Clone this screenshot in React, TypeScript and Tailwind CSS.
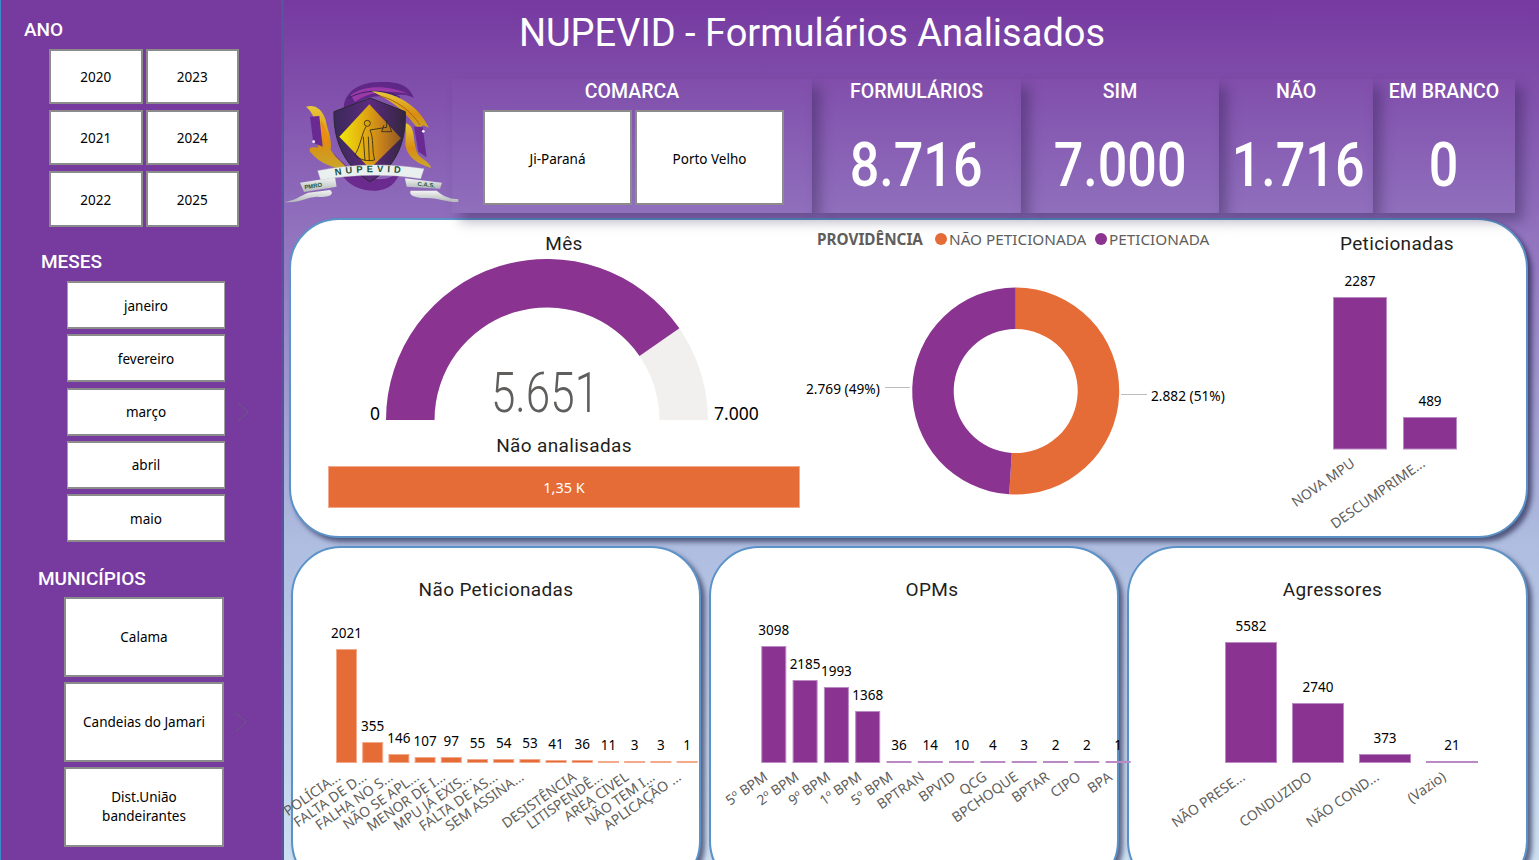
import React from "react";

const din = "font-['Roboto',sans-serif]";
const seg = "font-['Noto_Sans',sans-serif]";
const PURPLE = "#8a3391";
const ORANGE = "#e66c37";

function Btn({ children, className }: { children: React.ReactNode; className?: string }) {
  return (
    <div className={`flex items-center justify-center bg-white text-center text-black text-[13.5px] leading-[19px] border-2 border-[#8b8b8b] ${seg} ${className ?? ""}`}>
      {children}
    </div>
  );
}

function Chevron() {
  return (
    <svg width="12" height="20" viewBox="0 0 12 20" className="shrink-0">
      <path d="M1 1 L11 10 L1 19" fill="none" stroke="#6a5a80" strokeWidth="1" />
    </svg>
  );
}

function SideHead({ children, className }: { children: React.ReactNode; className: string }) {
  return <div className={`h-6 leading-6 text-white text-[19px] font-medium translate-y-px ${din} ${className}`}>{children}</div>;
}

function Sidebar() {
  return (
    <aside className="w-[284px] shrink-0 h-full bg-[#773a9f] border-l border-l-[#3d8ac8] border-r-[3px] border-r-[#56559c] flex flex-col">
      <SideHead className="mt-[17px] ml-[23px]">ANO</SideHead>
      <div className="mt-2 ml-[48px] w-[190px] grid grid-cols-2 gap-x-[3px] gap-y-[6px] grid-rows-[55px_55px_56px]">
        {["2020", "2023", "2021", "2024", "2022", "2025"].map((y) => (
          <Btn key={y} className="pt-[2px]">{y}</Btn>
        ))}
      </div>
      <SideHead className="mt-[22px] ml-10">MESES</SideHead>
      <div className="mt-2 ml-[66px] flex items-center gap-[12px]">
        <div className="w-[158px] flex flex-col gap-[5.25px]">
          {["janeiro", "fevereiro", "março", "abril", "maio"].map((m) => (
            <Btn key={m} className="h-12 pt-[2px] !border-x !border-x-[#a0a0a0]">{m}</Btn>
          ))}
        </div>
        <Chevron />
      </div>
      <SideHead className="mt-6 ml-[37px]">MUNICÍPIOS</SideHead>
      <div className="mt-[7px] ml-[63px] flex items-center gap-[11px]">
        <div className="w-[160px] flex flex-col gap-[5px]">
          <Btn className="h-20">Calama</Btn>
          <Btn className="h-20">Candeias do Jamari</Btn>
          <Btn className="h-20 px-4">Dist.União bandeirantes</Btn>
        </div>
        <Chevron />
      </div>
    </aside>
  );
}

function Logo() {
  return (
    <svg viewBox="284 79 168 134" width="168" height="134" className="block overflow-visible">
      <defs>
        <linearGradient id="gold" x1="0" y1="0" x2="0" y2="1">
          <stop offset="0" stopColor="#e8c93a" />
          <stop offset=".55" stopColor="#d98d12" />
          <stop offset="1" stopColor="#c9a92c" />
        </linearGradient>
        <linearGradient id="dia" x1="0" y1="0" x2="1" y2="0">
          <stop offset="0" stopColor="#f0e80c" />
          <stop offset=".45" stopColor="#e0a412" />
          <stop offset=".7" stopColor="#c47f1c" />
          <stop offset="1" stopColor="#8f5a24" />
        </linearGradient>
        <linearGradient id="shield" x1="0" y1="0" x2="1" y2="0">
          <stop offset="0" stopColor="#3a2a58" />
          <stop offset=".5" stopColor="#5c2a80" />
          <stop offset="1" stopColor="#33263f" />
        </linearGradient>
        <linearGradient id="silver" x1="0" y1="0" x2="0" y2="1">
          <stop offset="0" stopColor="#f2f5f4" />
          <stop offset="1" stopColor="#b4b8b8" />
        </linearGradient>
      </defs>
      <g transform="translate(280 70) scale(.3333)">
        <path d="M192 125 C185 70 235 32 310 36 C350 36 385 42 402 84 C375 70 350 72 330 85 C300 72 250 78 215 112 Z" fill="#5f2888" />
        <path d="M212 75 C260 42 330 48 385 72 C335 60 270 62 225 96 Z" fill="#9a3aa8" />
        <path d="M205 85 C255 55 320 60 360 82" fill="none" stroke="#3b2160" strokeWidth="3" />
        <path d="M160 250 C172 315 210 365 290 362 C335 358 352 332 362 300 C320 345 240 340 160 250 Z" fill="#6b2a8e" />
        <path d="M275 64 C340 66 412 100 447 174 C428 160 420 165 426 188 C395 160 375 110 275 64 Z" fill="url(#gold)" />
        <path d="M300 78 C350 90 395 125 420 165" fill="none" stroke="#a8660e" strokeWidth="3" />
        <path d="M378 160 C410 170 395 215 415 255 C430 270 447 275 454 294 C420 282 385 270 376 225 Z" fill="url(#gold)" />
        <path d="M402 170 L428 170 L440 262 L415 245 Z" fill="#6a2a94" />
        <circle cx="430" cy="184" r="4" fill="#fff" />
        <path d="M78 110 C102 102 127 115 137 150 C142 180 157 205 152 240 C172 270 192 280 207 302 C165 296 120 282 90 245 C84 225 105 235 115 232 C105 190 115 140 78 110 Z" fill="url(#gold)" />
        <path d="M90 140 L118 138 L128 230 L100 218 Z" fill="#6a2a94" />
        <path d="M122 150 C140 175 145 205 140 232 L128 200 Z" fill="#ef8a12" />
        <circle cx="101" cy="215" r="4" fill="#fff" />
        <path d="M162 125 L270 84 L376 125 C378 200 360 285 270 335 C185 285 160 200 162 125 Z" fill="url(#shield)" stroke="#2b2630" strokeWidth="3" />
        <path d="M268 103 L363 205 L270 296 L178 200 Z" fill="url(#dia)" />
        <g fill="none" stroke="#2a2a14" strokeWidth="2.5">
          <circle cx="262" cy="160" r="9" />
          <path d="M258 170 C245 190 240 235 224 255 C240 270 262 275 284 270 C275 240 282 205 270 180 L320 172" />
          <path d="M320 150 L320 172 M305 185 L335 185 M305 185 L312 165 M335 185 L328 165 M250 200 L255 272 M265 200 L268 272" />
        </g>
        <path d="M60 338 L165 322 L170 350 L72 366 Z" fill="url(#silver)" />
        <path d="M375 325 L486 338 L480 356 L380 350 Z" fill="url(#silver)" />
        <path d="M12 396 C45 392 60 378 85 368 L150 360 C165 372 150 384 110 380 C80 382 55 400 12 396 Z" fill="url(#silver)" />
        <path d="M392 362 L470 362 C490 380 510 386 535 388 L535 396 C500 398 485 385 440 384 C405 385 385 375 392 362 Z" fill="url(#silver)" />
        <path d="M113 302 C220 280 330 280 432 296 L422 326 C330 312 220 312 122 330 Z" fill="#eaf0ef" stroke="#c5cccb" strokeWidth="1" />
        <path id="nupevidArc" d="M150 320 C220 304 320 302 400 314" fill="none" />
        <text className="font-['Liberation_Sans',sans-serif] font-bold text-[28px] fill-[#164f3c]" letterSpacing="12">
          <textPath href="#nupevidArc" startOffset="16">NUPEVID</textPath>
        </text>
        <text x="74" y="358" transform="rotate(-9 74 358)" className="font-['Liberation_Sans',sans-serif] font-bold text-[18px] fill-[#1d5a45]">PMRO</text>
        <text x="412" y="347" transform="rotate(7 412 347)" className="font-['Liberation_Sans',sans-serif] font-bold text-[18px] fill-[#1d5a45]">C.A.S.</text>
      </g>
    </svg>
  );
}

function Kpi({ label, value, className, valueClass }: { label: string; value: string; className: string; valueClass?: string }) {
  return (
    <div className={`flex flex-col items-center bg-white/[0.015] shadow-[8px_8px_12px_rgba(30,20,60,0.35)] ${className}`}>
      <div className={`mt-[1px] h-6 leading-[24px] text-white text-[19.5px] font-medium whitespace-nowrap ${din}`}>{label}</div>
      <div className={`mt-[25px] h-[72px] leading-[72px] text-white text-[62px] font-medium scale-x-[0.84] ${din} ${valueClass ?? ""}`}>{value}</div>
    </div>
  );
}

function KpiRow() {
  return (
    <div className="relative z-10 flex h-[134px] shrink-0">
      <div className="w-[168px] shrink-0">
        <Logo />
      </div>
      <div className="w-[360px] shrink-0 flex flex-col bg-white/[0.015] shadow-[8px_8px_12px_rgba(30,20,60,0.35)]">
        <div className={`ml-[32px] w-[296px] text-center mt-[1px] h-6 leading-6 text-white text-[19.5px] font-medium ${din}`}>COMARCA</div>
        <div className="mt-[6px] ml-[31px] flex gap-[3px]">
          <Btn className="w-[149px] h-[95px] pt-[3px]">Ji-Paraná</Btn>
          <Btn className="w-[149px] h-[95px] pt-[3px]">Porto Velho</Btn>
        </div>
      </div>
      <Kpi label="FORMULÁRIOS" value="8.716" className="w-[209px]" />
      <Kpi label="SIM" value="7.000" className="w-[198px]" />
      <Kpi label="NÃO" value="1.716" className="w-[154px]" valueClass="translate-x-[2px]" />
      <Kpi label="EM BRANCO" value="0" className="w-[142px]" />
    </div>
  );
}

function polar(cx: number, cy: number, r: number, deg: number) {
  const a = (deg * Math.PI) / 180;
  return [cx + r * Math.cos(a), cy + r * Math.sin(a)];
}

function ringSlice(cx: number, cy: number, R: number, r: number, a0: number, a1: number) {
  const [x0, y0] = polar(cx, cy, R, a0);
  const [x1, y1] = polar(cx, cy, R, a1);
  const [x2, y2] = polar(cx, cy, r, a1);
  const [x3, y3] = polar(cx, cy, r, a0);
  const large = a1 - a0 > 180 ? 1 : 0;
  return `M${x0} ${y0} A${R} ${R} 0 ${large} 1 ${x1} ${y1} L${x2} ${y2} A${r} ${r} 0 ${large} 0 ${x3} ${y3} Z`;
}

function Gauge() {
  const end = -180 + (5651 / 7000) * 180;
  return (
    <svg viewBox="328 255 472 175" width="472" height="175" className="block overflow-visible">
      <path d={ringSlice(547, 420, 161, 112.5, -180, 0)} fill="#f1f0ee" />
      <path d={ringSlice(547, 420, 161, 112.5, -180, end)} fill={PURPLE} />
      <text x="0" y="0" textAnchor="middle" className={`${din} font-light text-[55px] fill-[#605e5c]`} transform="translate(545 412) scale(0.8 1)">5.651</text>
      <text x="375" y="420" textAnchor="middle" className={`${seg} text-[17.5px] fill-black`}>0</text>
      <text x="714" y="420" className={`${seg} text-[17.5px] fill-black`}>7.000</text>
    </svg>
  );
}

function Donut() {
  return (
    <svg viewBox="800 250 490 280" width="490" height="280" className="block overflow-visible">
      <path d={ringSlice(1015.7, 391, 103.5, 62, -90, -90 + 183.6)} fill={ORANGE} />
      <path d={ringSlice(1015.7, 391, 103.5, 62, -90 + 183.6, 270)} fill={PURPLE} />
      <line x1="885" y1="387.5" x2="910" y2="387.5" stroke="#bdbdbd" />
      <line x1="1121" y1="394.5" x2="1147" y2="394.5" stroke="#bdbdbd" />
      <text x="806" y="394" className={`${seg} text-[13.7px] fill-black`}>2.769 (49%)</text>
      <text x="1151" y="401" className={`${seg} text-[13.7px] fill-black`}>2.882 (51%)</text>
    </svg>
  );
}

type Bar = { x: number; w: number; top: number; v: string };
type Lab = { t: string; x: number };

function Bars({ bars, labs, color, edge, lx = -5, base = 763 }: { bars: Bar[]; labs: Lab[]; color: string; edge: string; lx?: number; base?: number }) {
  return (
    <>
      {bars.map((b) => (
        <g key={b.x}>
          <rect x={b.x + 0.5} y={b.top + 0.5} width={b.w - 1} height={Math.max(base - b.top - 1, 1)} fill={color} stroke={edge} />
          <text x={b.x + b.w / 2} y={b.top - 11} textAnchor="middle" className={`${seg} text-[13.5px] fill-black`}>{b.v}</text>
        </g>
      ))}
      {labs.map((l) => (
        <text key={l.t + l.x} transform={`translate(${l.x + lx} ${base + 16}) rotate(-35)`} textAnchor="end" className={`${seg} text-[14px] fill-[#605e5c]`}>{l.t}</text>
      ))}
    </>
  );
}

const npVals = ["2021", "355", "146", "107", "97", "55", "54", "53", "41", "36", "11", "3", "3", "1"];
const npTops = [649, 742, 754, 757, 757, 759, 759, 759, 760, 760, 761, 761, 761, 761];
const npBars: Bar[] = npVals.map((v, i) => ({ x: 336 + 26.2 * i, w: 21, top: npTops[i], v }));
const npLabs = ["POLÍCIA...", "FALTA DE D...", "FALHA NO S...", "NÃO SE APL...", "MENOR DE I...", "MPU JÁ EXIS...", "FALTA DE AS...", "SEM ASSINA...", "", "DESISTÊNCIA", "LITISPENDÊ...", "AREA CIVEL", "NÃO TEM I...", "APLICAÇÃO ..."];
const npL: Lab[] = npLabs.map((t, i) => ({ t, x: 346.5 + 26.2 * i }));

const opVals = ["3098", "2185", "1993", "1368", "36", "14", "10", "4", "3", "2", "2", "1"];
const opTops = [646, 680, 687, 711, 761, 761, 761, 761, 761, 761, 761, 761];
const opBars: Bar[] = opVals.map((v, i) => ({ x: 761.3 + 31.3 * i, w: 25, top: opTops[i], v }));
const opLabs = ["5º BPM", "2º BPM", "9º BPM", "1º BPM", "5º BPM", "BPTRAN", "BPVID", "QCG", "BPCHOQUE", "BPTAR", "CIPO", "BPA"];
const opL: Lab[] = opLabs.map((t, i) => ({ t, x: 773.7 + 31.3 * i }));

const agBars: Bar[] = [
  { x: 1225, w: 52, top: 642, v: "5582" },
  { x: 1292, w: 52, top: 703, v: "2740" },
  { x: 1359, w: 52, top: 754, v: "373" },
  { x: 1426, w: 52, top: 761, v: "21" },
];
const agL: Lab[] = [
  { t: "NÃO PRESE...", x: 1251 },
  { t: "CONDUZIDO", x: 1318 },
  { t: "NÃO COND...", x: 1385 },
  { t: "(Vazio)", x: 1452 },
];

function Title({ children }: { children: React.ReactNode }) {
  return <div className={`h-6 leading-6 text-[19px] text-[#1f1e1d] tracking-[0.35px] whitespace-nowrap translate-y-px ${din}`}>{children}</div>;
}

function TopPanel() {
  return (
    <section className="ml-[5px] mt-[5px] w-[1239px] h-[320px] shrink-0 flex rounded-[50px] bg-white border-2 border-[#5b92c8] shadow-[4px_4px_5px_rgba(20,20,60,0.6)]">
      <div className="ml-[37px] w-[472px] shrink-0 flex flex-col items-center pt-[11px]">
        <Title>Mês</Title>
        <Gauge />
        <div className="mt-[3px]"><Title>Não analisadas</Title></div>
        <div className={`mt-[9px] w-full h-[42px] pt-[2px] flex items-center justify-center bg-[#e66c37] border border-[#f4a98c] text-white text-[14.5px] ${seg}`}>1,35 K</div>
      </div>
      <div className="w-[490px] shrink-0 flex flex-col pt-2">
        <div className={`h-[22px] ml-[17px] flex items-center text-[15.3px] text-[#605e5c] whitespace-nowrap ${seg}`}>
          <span className="w-[118px] font-bold">PROVIDÊNCIA</span>
          <span className="w-3 h-3 rounded-full bg-[#e66c37]" />
          <span className="ml-[2px] w-[146px]">NÃO PETICIONADA</span>
          <span className="w-3 h-3 rounded-full bg-[#8a3391]" />
          <span className="ml-[2px]">PETICIONADA</span>
        </div>
        <Donut />
      </div>
      <div className="w-[236px] shrink-0 flex flex-col pt-[11px]">
        <div className="w-[214px] flex justify-center"><Title>Peticionadas</Title></div>
        <svg viewBox="1290 255 236 280" width="236" height="280" className="block overflow-visible">
          <Bars
            bars={[
              { x: 1333, w: 54, top: 297, v: "2287" },
              { x: 1403, w: 54, top: 417, v: "489" },
            ]}
            labs={[
              { t: "NOVA MPU", x: 1360 },
              { t: "DESCUMPRIME...", x: 1430 },
            ]}
            color={PURPLE}
            edge="#b98ac4"
            lx={-4}
            base={449.5}
          />
        </svg>
      </div>
    </section>
  );
}

function ChartPanel({ title, x, w, className, titleClass, children }: { title: string; x: number; w: number; className: string; titleClass: string; children: React.ReactNode }) {
  return (
    <section className={`relative h-[345px] shrink-0 rounded-[50px] bg-white border-2 border-[#5b92c8] shadow-[4px_4px_5px_rgba(20,20,60,0.6)] ${className}`}>
      <div className={`pt-[29px] flex justify-center ${titleClass}`}><Title>{title}</Title></div>
      <svg viewBox={`${x} 601 ${w} 240`} width={w} height="240" className="block overflow-visible">
        {children}
      </svg>
    </section>
  );
}

export default function App() {
  return (
    <div className="flex w-[1539px] h-[860px] overflow-hidden">
      <Sidebar />
      <main className="flex-1 h-full flex flex-col bg-[linear-gradient(180deg,#7639a0_0%,#9172be_27%,#aebde0_63%,#cde0f2_100%)]">
        <div className={`w-[1056px] h-[66px] mb-[13px] shrink-0 flex items-center justify-center text-white text-[38px] whitespace-nowrap ${din}`}>
          NUPEVID - Formulários Analisados
        </div>
        <KpiRow />
        <TopPanel />
        <div className="mt-[8px] ml-[7px] flex gap-[8px] shrink-0">
          <ChartPanel title="Não Peticionadas" x={293} w={406} className="w-[410px]" titleClass="">
            <Bars bars={npBars} labs={npL} color={ORANGE} edge="#f3a98c" />
          </ChartPanel>
          <ChartPanel title="OPMs" x={711} w={406} className="w-[410px] z-10" titleClass="pl-[36px]">
            <Bars bars={opBars} labs={opL} color={PURPLE} edge="#b98ac4" />
          </ChartPanel>
          <ChartPanel title="Agressores" x={1129} w={397} className="w-[401px]" titleClass="pl-[10px]">
            <Bars bars={agBars} labs={agL} color={PURPLE} edge="#b98ac4" />
          </ChartPanel>
        </div>
      </main>
    </div>
  );
}
